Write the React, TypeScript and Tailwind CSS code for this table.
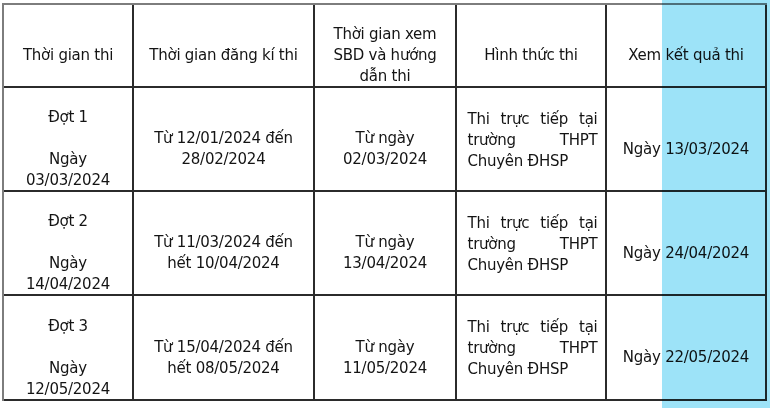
import * as React from 'react'

type Row = {
  dot: string
  ngay: string
  dangKi: string[]
  sbd: string[]
  ketQua: string
}

const rows: Row[] = [
  {
    dot: 'Đợt 1',
    ngay: '03/03/2024',
    dangKi: ['Từ 12/01/2024 đến', '28/02/2024'],
    sbd: ['Từ ngày', '02/03/2024'],
    ketQua: 'Ngày 13/03/2024',
  },
  {
    dot: 'Đợt 2',
    ngay: '14/04/2024',
    dangKi: ['Từ 11/03/2024 đến', 'hết 10/04/2024'],
    sbd: ['Từ ngày', '13/04/2024'],
    ketQua: 'Ngày 24/04/2024',
  },
  {
    dot: 'Đợt 3',
    ngay: '12/05/2024',
    dangKi: ['Từ 15/04/2024 đến', 'hết 08/05/2024'],
    sbd: ['Từ ngày', '11/05/2024'],
    ketQua: 'Ngày 22/05/2024',
  },
]

const base =
  'flex items-center justify-center text-center border-r-2 border-b-2 border-[#2b2b2b]'
// most cells sit a bit below the middle
const cell = `${base} pt-[20px]`

const Lines = ({lines}: {lines: string[]}) => (
  <div>
    {lines.map((l, i) => (
      <div key={i}>{l}</div>
    ))}
  </div>
)

export default function App() {
  return (
    <div
      className="relative w-[770px] h-[408px] overflow-hidden bg-white text-[#141414] text-[15px] leading-[21px] tracking-[-0.25px]"
      style={{fontFamily: '"DejaVu Sans", Verdana, sans-serif'}}
    >
      <div className="ml-[2px] mt-[3px] w-fit border-l-2 border-t-2 border-[#7d7d7d]">
        <div className="grid grid-cols-[130px_181px_142px_150px_160px] grid-rows-[83px_104px_104px_105px]">
          {/* header */}
          <div className={cell}>Thời gian thi</div>
          <div className={cell}>Thời gian đăng kí thi</div>
          <div className={cell}>
            <Lines lines={['Thời gian xem', 'SBD và hướng', 'dẫn thi']} />
          </div>
          <div className={cell}>Hình thức thi</div>
          <div className={cell}>Xem kết quả thi</div>

          {rows.map((r) => (
            <React.Fragment key={r.dot}>
              <div className={cell}>
                <Lines lines={[r.dot, '\u00a0', 'Ngày', r.ngay]} />
              </div>
              <div className={cell}>
                <Lines lines={r.dangKi} />
              </div>
              <div className={cell}>
                <Lines lines={r.sbd} />
              </div>
              <div className={`${base} pl-[3px] pt-[2px]`}>
                <p className="w-[130px] text-justify">
                  Thi trực tiếp tại trường THPT Chuyên ĐHSP
                </p>
              </div>
              <div className={cell}>{r.ketQua}</div>
            </React.Fragment>
          ))}
        </div>
      </div>

      {/* highlighted column */}
      <div className="absolute left-[662px] top-0 w-[108px] h-[408px] bg-[#9de3f8] mix-blend-multiply" />
    </div>
  )
}
